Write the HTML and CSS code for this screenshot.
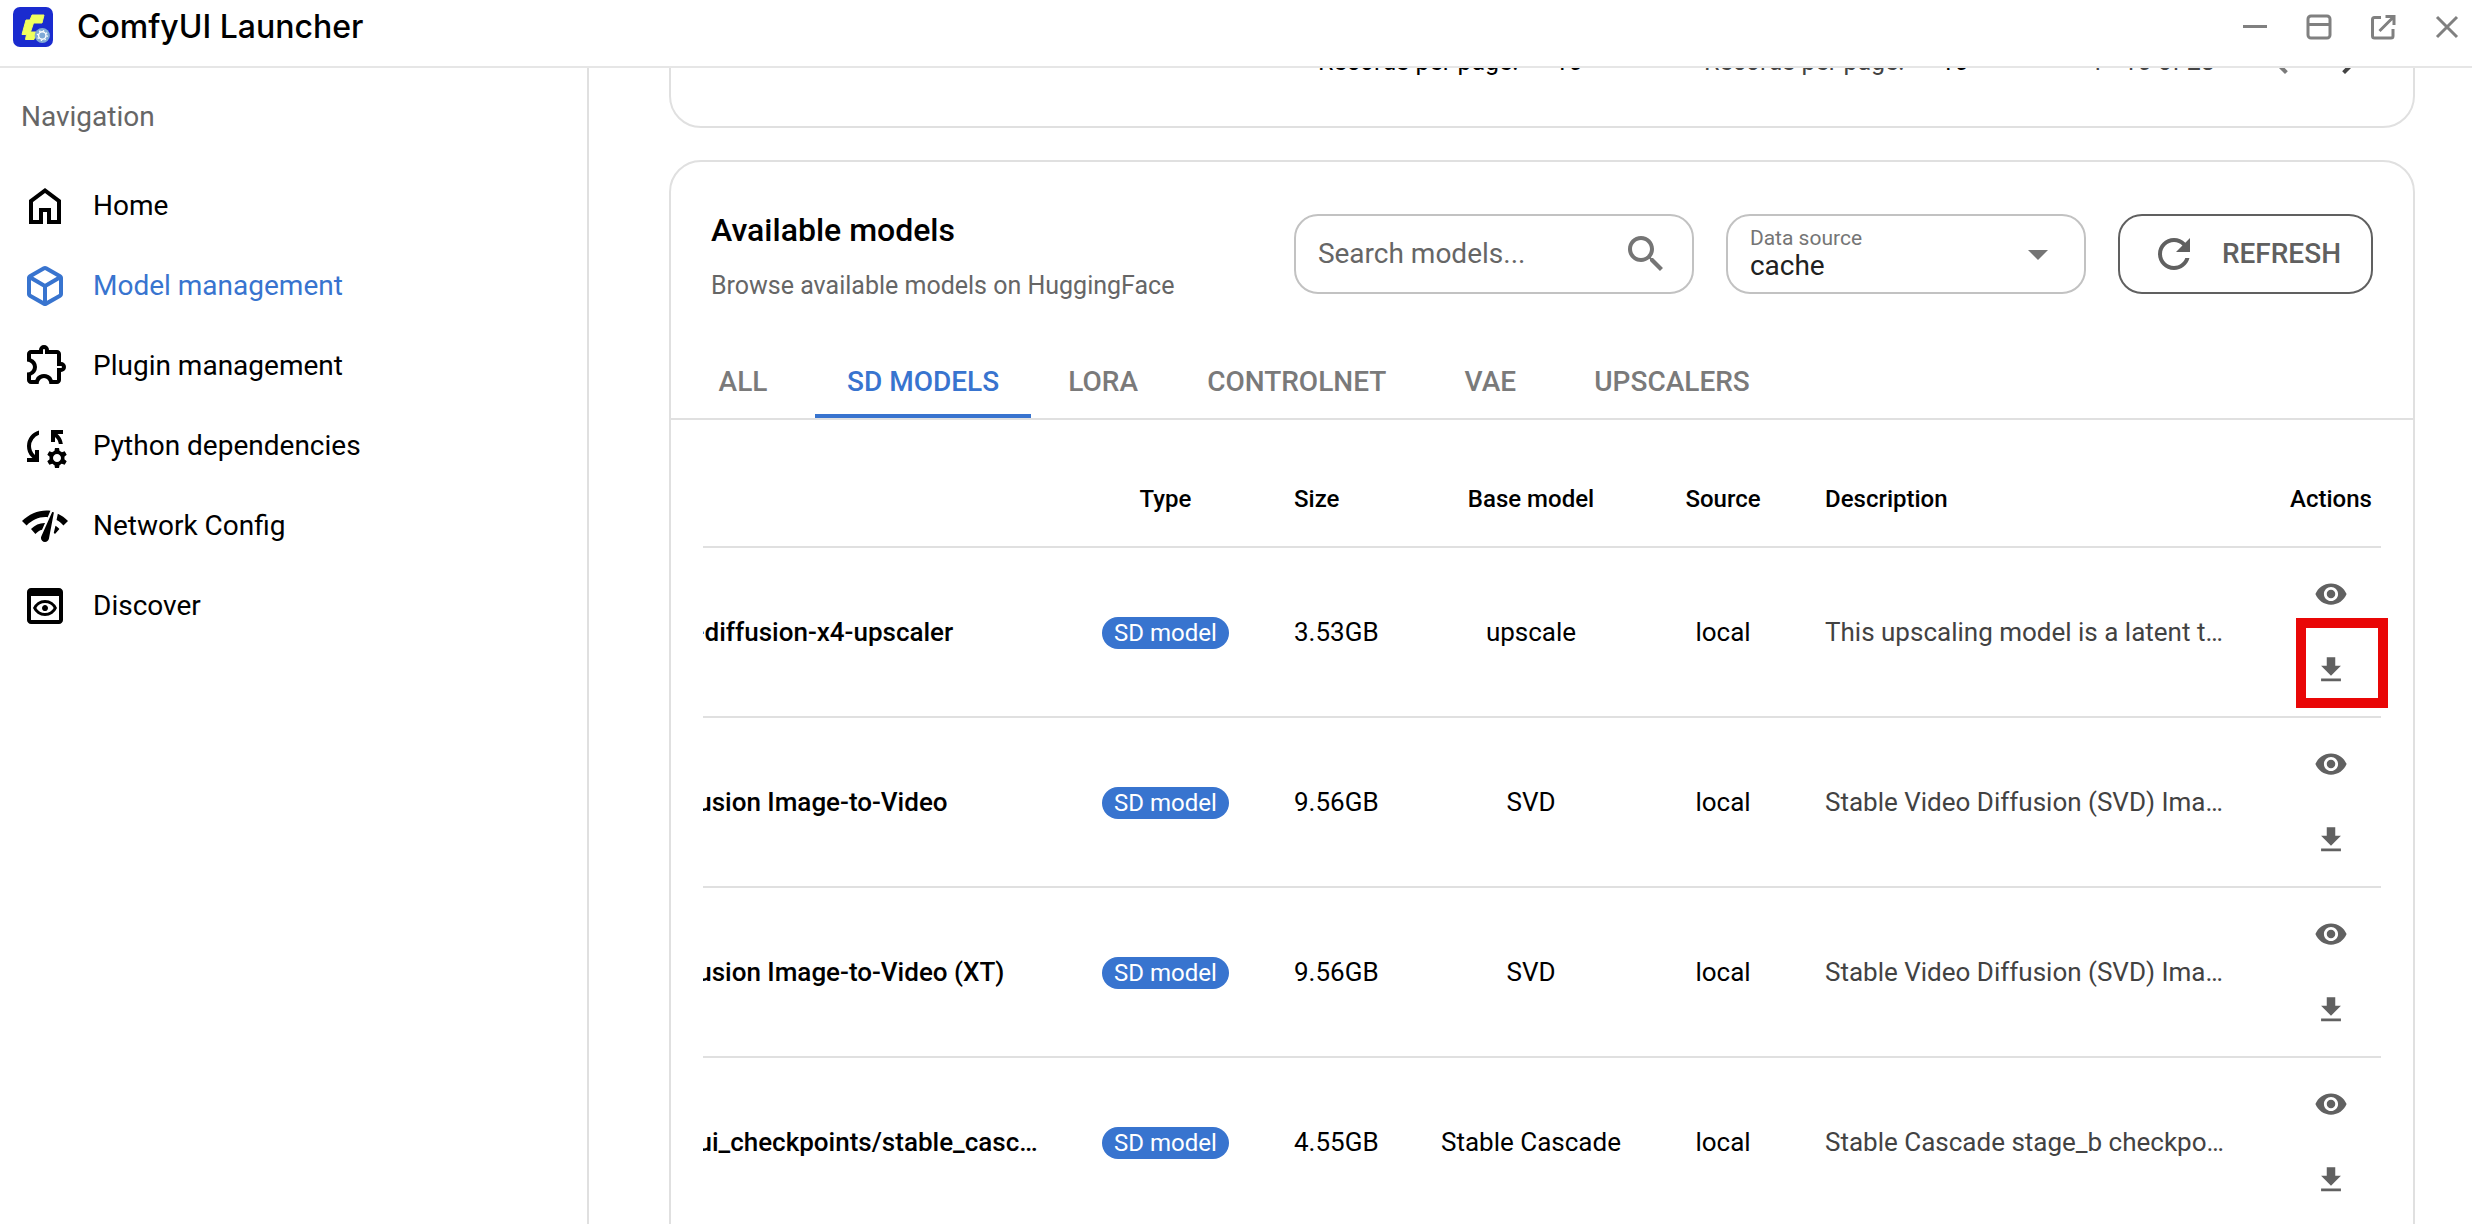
FILE: index.html
```html
<!DOCTYPE html>
<html lang="en">
<head>
<meta charset="utf-8">
<title>ComfyUI Launcher</title>
<link rel="stylesheet" href="styles.css">
</head>
<body>
<header class="titlebar">
  <svg class="logo" viewBox="0 0 40 40" aria-hidden="true">
    <rect width="40" height="40" rx="7" fill="#1a2bcf"/>
    <path d="M19 8h12l-2 8h-8.500l-3 9h5.500l-2 7.500h-8.500l1-5h-4.500l4-14.500h4z" fill="#f0ff5e" stroke="#f0ff5e" stroke-width="1" stroke-linejoin="round"/>
    <circle cx="29.300" cy="28.500" r="7.600" fill="#7fa9d6"/>
    <circle cx="29.300" cy="28.500" r="3.700" fill="none" stroke="#fff" stroke-width="1.400"/>
    <circle cx="29.300" cy="28.500" r="4.900" fill="none" stroke="#fff" stroke-width="1.400" stroke-dasharray="1.300 2.550"/>
  </svg>
  <h1 class="app-name">ComfyUI Launcher</h1>
  <div class="window-controls">
    <button class="window-button" aria-label="Minimize"><svg viewBox="0 0 28 28"><path d="M2 13.500h24"/></svg></button>
    <button class="window-button" aria-label="Split layout"><svg viewBox="0 0 28 28"><rect x="3" y="3" width="22" height="22" rx="3"/><path d="M3 11.500h22"/></svg></button>
    <button class="window-button" aria-label="Open in browser"><svg viewBox="0 0 28 28"><path d="M12 4.500H5.500a2 2 0 0 0-2 2V23a2 2 0 0 0 2 2H22a2 2 0 0 0 2-2v-7M16.500 3.500H25V12M25 3.500 10.500 18"/></svg></button>
    <button class="window-button" aria-label="Close"><svg viewBox="0 0 28 28"><path d="M4 4l20 20M24 4 4 24"/></svg></button>
  </div>
</header>
<div class="shell">
  <nav class="sidebar" aria-label="Navigation">
    <p class="sidebar-title">Navigation</p>
    <a class="nav-item" href="#home"><svg class="icon" viewBox="0 -960 960 960"><path d="M240-200h120v-240h240v240h120v-360L480-740 240-560v360Zm-80 80v-480l320-240 320 240v480H520v-240h-80v240H160Z"/></svg>Home</a>
    <a class="nav-item active" href="#models" aria-current="page"><svg class="icon" viewBox="0 -960 960 960"><path d="M440-183v-274L200-596v274l240 139Zm80 0 240-139v-274L520-457v274Zm-40-343 237-137-237-137-237 137 237 137ZM160-252q-19-11-29.500-29T120-321v-318q0-22 10.500-40t29.500-29l280-161q19-11 40-11t40 11l280 161q19 11 29.500 29t10.500 40v318q0 22-10.500 40T800-252L520-91q-19 11-40 11t-40-11L160-252Z"/></svg>Model management</a>
    <a class="nav-item" href="#plugins"><svg class="icon" viewBox="0 -960 960 960"><path d="M352-120H200q-33 0-56.500-23.500T120-200v-152q48 0 84-30.500t36-77.500q0-47-36-77.500T120-568v-152q0-33 23.500-56.500T200-800h160q0-42 29-71t71-29q42 0 71 29t29 71h160q33 0 56.500 23.500T800-720v160q42 0 71 29t29 71q0 42-29 71t-71 29v160q0 33-23.500 56.500T720-120H568q0-50-31.500-85T460-240q-45 0-76.500 35T352-120Zm-152-80h85q24-66 77-93t98-27q45 0 98 27t77 93h85v-240h80q8 0 14-6t6-14q0-8-6-14t-14-6h-80v-240H480v-80q0-8-6-14t-14-6q-8 0-14 6t-6 14v80H200v88q54 20 87 67t33 105q0 57-33 104t-87 68v88Z"/></svg>Plugin management</a>
    <a class="nav-item" href="#python"><svg class="icon" viewBox="0 -960 960 960"><path d="M120-160v-80h110l-16-14q-52-46-73-105t-21-119q0-111 66.500-197.500T360-790v84q-72 26-116 88.500T200-478q0 45 17 87.500t53 78.500l10 10v-98h80v240H120Zm637-360q-7-37-21-68t-46-60l-10-10v98h-80v-240h240v80H730l16 14q38 38 61 86t30 100h-80ZM680-40l-12-60q-12-5-22.500-10.500T624-124l-58 18-40-68 46-40q-2-14-2-26t2-26l-46-40 40-68 58 18q11-8 21.500-13.500T668-380l12-60h80l12 60q12 5 22.500 11t21.500 15l58-20 40 70-46 40q2 12 2 25t-2 25l46 40-40 68-58-18q-11 8-21.500 13.500T772-100l-12 60h-80Zm40-120q33 0 56.500-23.500T800-240q0-33-23.500-56.500T720-320q-33 0-56.500 23.500T640-240q0 33 23.500 56.500T720-160Z"/></svg>Python dependencies</a>
    <a class="nav-item" href="#network"><svg class="icon" viewBox="0 0 24 24"><path d="M15.900 5c-.17 0-.32.09-.41.23l-.07.15-5.180 11.650c-.16.29-.26.61-.26.96 0 1.110.9 2.010 2.010 2.010.96 0 1.770-.68 1.960-1.590l.01-.03L16.400 5.500c0-.28-.22-.5-.5-.5zM.5 9.500l2.300 2.200c2.880-2.880 6.790-4.580 10.530-4.120l1.390-3.180C9.890 3.640 4.240 5.770.5 9.500zm20.700 2.200l2.300-2.200c-1.640-1.640-3.150-2.620-5.090-3.570l-.63 3.120c1.300.72 2.300 1.530 3.420 2.650zm-4.200 4.300l2.200-2.500c-.7-.8-1.100-1.020-1.960-1.590l-.85 3.420c.3.270.4.39.61.67zM5 13.500l2.200 2.500c1.130-1.130 2.060-1.790 3.330-2.100l1.480-3.380c-2.630-.08-5 .97-7.010 2.980z"/></svg>Network Config</a>
    <a class="nav-item" href="#discover"><svg class="icon" viewBox="0 -960 960 960"><path d="M200-120q-33 0-56.500-23.500T120-200v-560q0-33 23.500-56.500T200-840h560q33 0 56.500 23.500T840-760v560q0 33-23.500 56.500T760-120H200Zm0-80h560v-480H200v480Zm280-80q-82 0-146.500-44.500T240-440q29-71 93.500-115.500T480-600q82 0 146.500 44.500T720-440q-29 71-93.500 115.500T480-280Zm0-60q56 0 102-26.500t72-73.500q-26-47-72-73.500T480-540q-56 0-102 26.500T306-440q26 47 72 73.500T480-340Zm0-40q25 0 42.500-17.500T540-440q0-25-17.500-42.500T480-500q-25 0-42.500 17.500T420-440q0 25 17.500 42.500T480-380Z"/></svg>Discover</a>
  </nav>
  <main class="content" id="content">
    <section class="card installed" aria-label="Installed models">
      <div class="pagination">
        <span class="page-size dark"><span>Records per page:</span><b>10</b></span>
        <span class="page-size"><span>Records per page:</span><b>10</b></span>
        <span class="page-range">1 - 10 of 28</span>
        <div class="page-buttons">
          <button class="page-button" aria-label="Previous page" disabled><svg class="icon" viewBox="0 0 24 24"><path d="M15.410 7.410 14 6l-6 6 6 6 1.410-1.410L10.830 12z"/></svg></button>
          <button class="page-button" aria-label="Next page"><svg class="icon" viewBox="0 0 24 24"><path d="M10 6 8.590 7.410 13.170 12l-4.580 4.590L10 18l6-6z"/></svg></button>
        </div>
      </div>
    </section>
    <section class="card" id="available">
      <div class="card-header">
        <div class="card-titles">
          <h2 class="card-title">Available models</h2>
          <p class="card-subtitle">Browse available models on HuggingFace</p>
        </div>
        <div class="search">
          <input class="search-input" type="text" placeholder="Search models..." aria-label="Search models">
          <svg class="icon" viewBox="0 0 24 24"><path d="M15.500 14h-.79l-.28-.27C15.410 12.590 16 11.110 16 9.500 16 5.910 13.090 3 9.500 3S3 5.910 3 9.500 5.910 16 9.500 16c1.610 0 3.090-.59 4.230-1.570l.27.28v.79l5 4.990L20.490 19l-4.990-5zm-6 0C7.010 14 5 11.990 5 9.500S7.010 5 9.500 5 14 7.010 14 9.500 11.990 14 9.500 14z"/></svg>
        </div>
        <div class="source">
          <div class="source-field">
            <label class="source-label" for="source">Data source</label>
            <select class="source-select" id="source"><option>cache</option><option>local</option><option>remote</option></select>
          </div>
          <svg class="icon" viewBox="0 0 24 24"><path d="M7 10l5 5 5-5z"/></svg>
        </div>
        <button class="refresh"><svg class="icon" viewBox="0 0 24 24"><path d="M17.650 6.350C16.200 4.900 14.210 4 12 4c-4.420 0-7.990 3.580-7.990 8s3.570 8 7.990 8c3.730 0 6.840-2.550 7.730-6h-2.080c-.82 2.330-3.040 4-5.650 4-3.310 0-6-2.690-6-6s2.690-6 6-6c1.660 0 3.140.69 4.220 1.780L13 11h7V4l-2.350 2.350z"/></svg>REFRESH</button>
      </div>
      <div class="tabs" role="tablist">
        <button class="tab" role="tab">ALL</button>
        <button class="tab selected" role="tab" aria-selected="true">SD MODELS</button>
        <button class="tab" role="tab">LORA</button>
        <button class="tab" role="tab">CONTROLNET</button>
        <button class="tab" role="tab">VAE</button>
        <button class="tab" role="tab">UPSCALERS</button>
      </div>
      <div class="table-area">
        <div class="table-scroll" id="models-scroll">
          <table class="models">
            <colgroup><col class="col-name"><col class="col-type"><col class="col-size"><col class="col-base"><col class="col-source"><col class="col-description"><col class="col-actions"></colgroup>
            <thead>
              <tr><th class="left">Name</th><th>Type</th><th class="left">Size</th><th>Base model</th><th>Source</th><th class="left">Description</th><th class="actions">Actions</th></tr>
            </thead>
            <tbody id="rows"></tbody>
          </table>
        </div>
        <div class="highlight"></div>
      </div>
    </section>
  </main>
</div>
<script src="app.js"></script>
</body>
</html>
```

FILE: app.js
```js
const models = [
  ["stabilityai/stable-diffusion-x4-upscaler", "3.53GB", "upscale", "This upscaling model is a latent text-guided"],
  ["Stable Video Diffusion Image-to-Video", "9.56GB", "SVD", "Stable Video Diffusion (SVD) Image-to-Video"],
  ["Stable Video Diffusion Image-to-Video (XT)", "9.56GB", "SVD", "Stable Video Diffusion (SVD) Image-to-Video"],
  ["stabilityai/comfyui_checkpoints/stable_cascade", "4.55GB", "Stable Cascade", "Stable Cascade stage_b checkpoints"],
];

const eye = '<svg viewBox="0 0 24 24"><path d="M12 4.500C7 4.500 2.730 7.610 1 12c1.730 4.390 6 7.500 11 7.500s9.270-3.110 11-7.500c-1.730-4.390-6-7.500-11-7.500zM12 17c-2.760 0-5-2.240-5-5s2.240-5 5-5 5 2.240 5 5-2.240 5-5 5zm0-8c-1.660 0-3 1.340-3 3s1.340 3 3 3 3-1.340 3-3-1.340-3-3-3z"/></svg>';
const download = '<svg viewBox="0 0 24 24"><path d="M19 9h-4V3H9v6H5l7 7 7-7zM5 18v2h14v-2H5z"/></svg>';

document.getElementById("rows").innerHTML = models.map(([name, size, base, description]) => `
  <tr>
    <td class="left name-cell"><div class="name">${name}</div></td>
    <td><span class="badge">SD model</span></td>
    <td class="left">${size}</td>
    <td>${base}</td>
    <td>local</td>
    <td class="left"><div class="description">${description}</div></td>
    <td class="actions"><div class="action-list">
      <button class="action" aria-label="View details">${eye}</button>
      <button class="action" aria-label="Download">${download}</button>
    </div></td>
  </tr>`).join("");

// Open on the available models, with the action column in view.
const content = document.getElementById("content");
content.scrollTop = document.getElementById("available").offsetTop - content.offsetTop - 92;
const scroller = document.getElementById("models-scroll");
scroller.scrollLeft = scroller.scrollWidth;
```

FILE: styles.css
```css
* { box-sizing: border-box; }

body {
  margin: 0;
  height: 100vh;
  display: flex;
  flex-direction: column;
  overflow: hidden;
  background: #fff;
  color: #000;
  font: 28px/40px Roboto, sans-serif;
}

h1, h2, p { margin: 0; font-weight: 400; }
button, input, select { font: inherit; color: inherit; background: none; border: 0; padding: 0; margin: 0; }
svg { display: block; fill: currentColor; }
.icon { width: 48px; height: 48px; flex: none; }

.titlebar {
  display: flex;
  align-items: center;
  flex: none;
  padding: 7px 11px 19px 13px;
  border-bottom: 2px solid #e6e6e6;
}
.logo { width: 40px; height: 40px; margin-right: 24px; }
.app-name { font-family: Inter, Roboto, sans-serif; font-size: 32px; font-weight: 500; flex: 1; }
.window-controls { display: flex; gap: 36px; color: #808080; }
.window-button { width: 28px; height: 28px; }
.window-button svg { width: 28px; height: 28px; fill: none; stroke: currentColor; stroke-width: 3; }

.shell { display: flex; flex: 1; min-height: 0; }
.sidebar { flex: none; width: 589px; border-right: 2px solid #e0e0e0; padding: 29px 21px; }
.sidebar-title { color: #666; padding-bottom: 29px; }
.nav-item { display: flex; align-items: center; gap: 24px; height: 80px; color: #000; text-decoration: none; }
.nav-item.active { color: #3874cf; }

.content { flex: 1; min-width: 0; overflow-y: auto; scrollbar-width: none; padding: 32px 57px 32px 80px; }
.card { border: 2px solid #e0e0e0; border-radius: 32px; }
.card + .card { margin-top: 32px; }

.installed { padding: 100px 40px 40px; }
.pagination { display: flex; justify-content: flex-end; align-items: center; height: 48px; font-size: 25px; color: #444; }
.page-size { display: flex; gap: 36px; width: 386px; }
.page-size b { font-weight: 400; color: #000; }
.page-size.dark { color: #000; }
.page-range { width: 167px; }
.page-buttons { display: flex; gap: 20px; }
.page-button:disabled { opacity: .7; }

.card-header { display: flex; align-items: center; gap: 32px; padding: 40px; }
.card-titles { flex: 1; display: flex; flex-direction: column; gap: 8px; }
.card-title { font-size: 32px; line-height: 56px; font-weight: 500; }
.card-subtitle { font-size: 25px; color: #666; }

.search, .source { display: flex; align-items: center; height: 80px; padding: 0 22px; border: 2px solid #c2c2c2; border-radius: 24px; color: #757575; }
.search { width: 400px; }
.search-input { flex: 1; min-width: 0; color: #000; outline: 0; }
.search-input::placeholder { color: #666; opacity: 1; }
.source { width: 360px; }
.source-field { flex: 1; display: flex; flex-direction: column; }
.source-label { font-size: 21px; line-height: 24px; color: #757575; }
.source-select { appearance: none; line-height: 32px; height: 32px; color: #212121; outline: 0; }
.refresh { display: flex; align-items: center; gap: 24px; height: 80px; padding: 0 30px; border: 2px solid #606060; border-radius: 24px; color: #606060; font-weight: 500; }

.tabs { display: flex; border-bottom: 2px solid #e0e0e0; }
.tab { height: 72px; min-width: 144px; padding: 4px 32px 0; font-weight: 500; color: #7a7a7a; border-bottom: 4px solid transparent; }
.tab.selected { color: #3874cf; border-color: #3874cf; }

.table-area { position: relative; padding: 32px; }
.table-scroll { overflow-x: auto; scrollbar-width: none; }
.models { width: 1895px; table-layout: fixed; border-collapse: separate; border-spacing: 0; }
.col-type { width: 225px; }
.col-size { width: 147px; }
.col-base { width: 212px; }
.col-source { width: 172px; }
.col-description { width: 472px; }
.col-actions { width: 100px; }
.models th { height: 96px; padding: 0 16px; font-size: 24px; font-weight: 500; border-bottom: 2px solid #e0e0e0; }
.models td { height: 170px; padding: 0 16px; font-size: 26px; text-align: center; border-bottom: 2px solid #e0e0e0; }
.models .left { text-align: left; }
.models .name-cell { padding-right: 8px; }
.models .actions { padding: 0 8px; }
.name, .description { overflow: hidden; text-overflow: ellipsis; white-space: nowrap; }
.name { font-weight: 500; }
.description { max-width: 400px; color: #424242; }
.badge { display: inline-block; padding: 0 12px; line-height: 32px; font-size: 24px; border-radius: 16px; background: #3874cf; color: #fff; }
.action-list { display: flex; flex-direction: column; align-items: center; gap: 8px; }
.action { width: 68px; height: 68px; display: grid; place-items: center; color: #616161; }
.action svg { width: 34px; height: 34px; }

/* Marks the download button of the first model. */
.highlight { position: absolute; top: 198px; right: 25px; width: 92px; height: 90px; border: 10px solid #e90707; pointer-events: none; }
```
